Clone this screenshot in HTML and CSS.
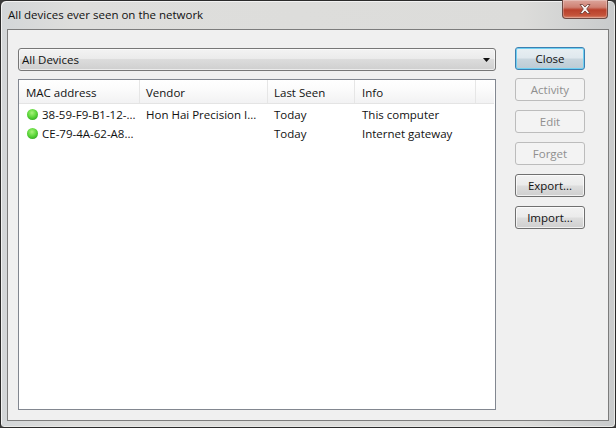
FILE: index.html
```html
<!DOCTYPE html>
<html lang="en">
<head>
<meta charset="utf-8">
<title>All devices ever seen on the network</title>
<link rel="stylesheet" href="styles.css">
</head>
<body>
<div class="window">
  <div class="titlebar">
    <span class="title">All devices ever seen on the network</span>
    <div class="close-x">
      <svg width="16" height="12" viewBox="0 0 16 12"><path d="M3 1.500h2.600L8 4l2.400-2.500H13L9.700 6 13 10.500h-2.600L8 8l-2.400 2.500H3L6.300 6z" fill="#f4f1ef" stroke="#6b3a32" stroke-width="0.8"/></svg>
    </div>
  </div>
  <div class="panel">
    <div class="main">
      <div class="combo">
        <span>All Devices</span>
        <svg class="arrow" width="7" height="4" viewBox="0 0 7 4"><path d="M0 0h7L3.500 4z" fill="#111"/></svg>
      </div>
      <div class="list">
        <div class="header">
          <div class="hcell c-mac">MAC address</div>
          <div class="hcell c-vendor">Vendor</div>
          <div class="hcell c-seen">Last Seen</div>
          <div class="hcell c-info">Info</div>
          <div class="hcell c-rest"></div>
        </div>
        <div class="row">
          <div class="cell c-mac"><i class="dot"></i>38-59-F9-B1-12-...</div>
          <div class="cell c-vendor">Hon Hai Precision I...</div>
          <div class="cell c-seen">Today</div>
          <div class="cell c-info">This computer</div>
        </div>
        <div class="row">
          <div class="cell c-mac"><i class="dot"></i>CE-79-4A-62-A8...</div>
          <div class="cell c-vendor"></div>
          <div class="cell c-seen">Today</div>
          <div class="cell c-info">Internet gateway</div>
        </div>
      </div>
    </div>
    <div class="buttons">
      <button class="btn default">Close</button>
      <button class="btn" disabled>Activity</button>
      <button class="btn" disabled>Edit</button>
      <button class="btn" disabled>Forget</button>
      <button class="btn">Export...</button>
      <button class="btn">Import...</button>
    </div>
  </div>
</div>
</body>
</html>
```
FILE: styles.css
```css
* { box-sizing: border-box; }
html, body { margin: 0; padding: 0; }
body {
  width: 616px;
  height: 428px;
  background: #3a3a3a;
  font-family: "Open Sans", "Noto Sans", sans-serif;
  font-size: 11.5px;
  color: #111;
  overflow: hidden;
}
.window {
  width: 616px;
  height: 428px;
  display: flex;
  flex-direction: column;
  border: 1px solid #2b2b2b;
  border-radius: 6px 6px 4px 4px;
  padding: 0 6px 6px;
  background: linear-gradient(90deg, #d3d6d8 0, #dededc 12%, #dcdcda 85%, #c9cbcc 100%);
  box-shadow: inset 1px 1px 0 #f2f2f2, inset -1px -1px 0 #e8e8e6;
}
.titlebar {
  height: 28px;
  flex: none;
  display: flex;
  justify-content: space-between;
  align-items: flex-start;
}
.title {
  margin: 5px 0 0 1px;
  line-height: 17px;
}
.close-x {
  width: 46px;
  height: 19px;
  margin: -1px 1px 0 0;
  display: flex;
  align-items: center;
  justify-content: center;
  border: 1px solid #6e4a44;
  border-top: 0;
  border-radius: 0 0 4px 4px;
  background: linear-gradient(#dca59b 0, #cf8173 40%, #b9402b 55%, #c4533a 85%, #d98a72 100%);
  box-shadow: inset 0 0 0 1px rgba(255,255,255,.25);
}
.panel {
  flex: 1;
  display: flex;
  gap: 19px;
  border: 1px solid #7c7c7c;
  background: #f0f0f0;
  padding: 18px 23px 10px 10px;
}
.main {
  width: 478px;
  display: flex;
  flex-direction: column;
  gap: 8px;
}
.combo {
  height: 23px;
  flex: none;
  display: flex;
  align-items: center;
  justify-content: space-between;
  padding: 0 5px 0 3px;
  border: 1px solid #777;
  border-radius: 3px;
  background: linear-gradient(#f3f3f3 0, #ebebeb 45%, #dcdcdc 50%, #cfcfcf 100%);
  box-shadow: inset 0 0 0 1px rgba(255,255,255,.6);
}
.arrow { flex: none; }
.list {
  flex: 1;
  border: 1px solid #828790;
  background: #fff;
}
.header {
  display: flex;
  height: 24px;
  border-bottom: 1px solid #e4e4e4;
  margin-right: 1px;
  margin-bottom: 1px;
  background: linear-gradient(#fff 0, #fbfbfb 40%, #f2f2f3 100%);
}
.hcell {
  line-height: 26px;
  padding-left: 7px;
  border-right: 1px solid #e6e6e6;
  white-space: nowrap;
}
.row { display: flex; height: 19px; line-height: 19px; }
.cell { padding-left: 7px; white-space: nowrap; }
.c-mac { width: 121px; }
.c-vendor { width: 128px; padding-left: 6px; }
.c-seen { width: 87px; padding-left: 6px; }
.c-info { width: 121px; padding-left: 7px; }
.c-rest { flex: 1; padding: 0; border-right: 0; }
.row .c-mac { padding-left: 8px; display: flex; align-items: center; }
.dot {
  width: 11px;
  height: 11px;
  margin-right: 4px;
  border-radius: 50%;
  flex: none;
  background: radial-gradient(circle at 45% 35%, #a9f27c 0, #5fd83c 45%, #2fa51f 85%, #2b8f22 100%);
}
.buttons {
  display: flex;
  flex-direction: column;
  gap: 9px;
  width: 70px;
  margin-top: -1px;
}
.btn {
  width: 70px;
  height: 23px;
  padding: 0;
  font: inherit;
  color: #111;
  border: 1px solid #707070;
  border-radius: 3px;
  background: linear-gradient(#f2f2f2 0, #ebebeb 48%, #dddddd 52%, #cfcfcf 100%);
  box-shadow: inset 0 0 0 1px rgba(255,255,255,.7);
}
.btn.default {
  border-color: #3c7fb1;
  background: linear-gradient(#e8eff3 0, #dfe8ee 48%, #c9d6de 52%, #bccbd4 100%);
  box-shadow: inset 0 0 0 1px #6fd0f2;
  margin-bottom: -1px;
}
.btn:disabled {
  color: #8f8f8f;
  border-color: #bcbcbc;
  background: #f3f3f3;
  box-shadow: none;
}
```
